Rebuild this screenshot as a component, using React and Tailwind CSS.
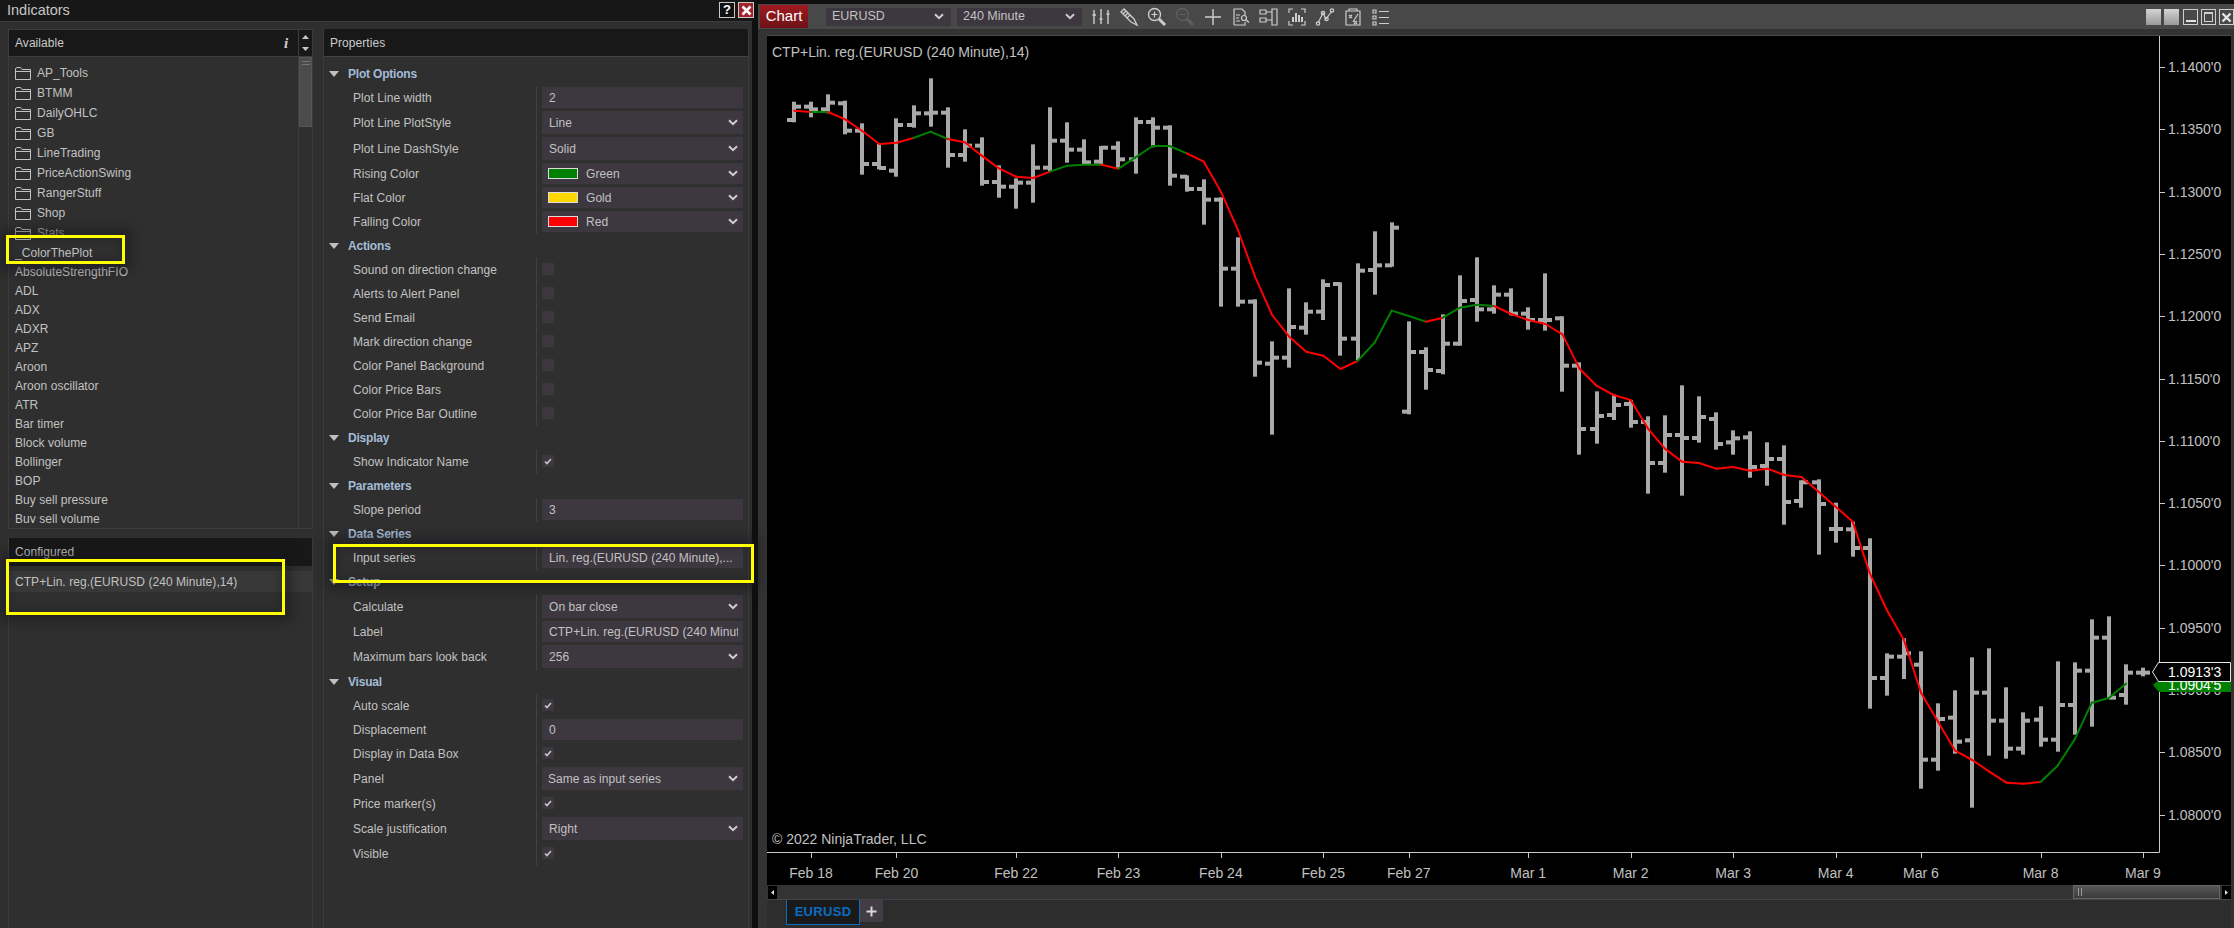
import React from "react";

const FONT = "font-['Liberation_Sans',Arial,sans-serif]";

const z9 = (y) => y / 3 + 60;
const z10 = (y) => y / 3 + 220;
const z11 = (y) => y / 3 + 500;

const bars9 = [
  [125,187,180,140],[125,172,140,148],[103,160,148,128],[122,223,130,212],[190,344,212,312],[252,328,312,324],
  [175,350,332,195],[136,203,195,160],[55,200,160,158],[142,323,158,285],[208,305,285,257],[232,377,257,366],
  [316,413,366,380],[355,446,380,368],[253,428,368,323],[142,335,323,242],[187,308,242,269],[238,312,269,307],
  [258,312,305,263],[244,325,263,298],[172,341,298,186],[172,262,186,203],[196,377,203,347],[346,395,350,387],
  [358,494,387,419],[412,740,419,626],[532,740,626,725],[718,950,725,908],[844,1124,911,893],[685,923,893,801],
  [727,824,803,755],[658,780,755,675],[667,887,672,836],[610,900,836,632],
];
const bars10 = [
  [34,224,150,136],[7,140,136,23],[304,583,575,396],[382,509,396,450],[283,463,453,371],[166,377,371,243],
  [112,305,240,268],[196,281,268,224],[205,286,224,281],[262,329,281,300],[160,332,300,300],[289,515,295,437],
  [427,704,437,627],[514,671,627,588],[523,600,585,555],[540,623,552,606],[589,821,606,729],[586,758,729,645],
  [496,827,645,654],[529,668,654,591],[577,689,597,672],[631,704,667,655],[634,773,652,741],[667,797,738,717],
  [676,914,717,846],[781,863,843,787],[778,1004,787,852],
];
const bars11 = [
  [8,128,87,87],[65,170,88,144],[115,626,144,534],[460,587,534,470],[415,537,470,460],[454,866,494,779],
  [610,812,779,657],[571,761,653,725],[472,923,721,578],[445,767,578,662],[562,776,662,746],[637,764,746,662],
  [619,740,659,719],[484,755,719,615],[487,704,615,512],[358,680,512,413],[349,596,413,593],[493,614,585,518],[503,529,518,518],
];
const bars = [
  ...bars9.map((b) => b.map(z9)),
  ...bars10.map((b) => b.map(z10)),
  ...bars11.map((b) => b.map(z11)),
];

const line = [
  ...[152,156,156,178,213,252,248,234,215,237,247,287,325,350,354,335,317,314,314,326,292,258,258,280,305,395,510,650,765,830,875,887,927,903].map(z9),
  ...[368,272,288,305,293,263,254,258,282,300,312,343,446,497,525,540,625,686,725,729,746,741,752,746,765,771,815,860,905].map(z10),
  ...[220,330,420,578,665,752,780,815,848,851,846,797,718,608,594,551].map(z11),
];
const greenSegs = new Set([1,7,8,15,16,17,19,20,21,22,33,34,35,36,38,39,40,73,74,75,76,77]);
const barX = (i) => 794 + i * 17.076;

const dates = [
  ["Feb 18",1],["Feb 20",6],["Feb 22",13],["Feb 23",19],["Feb 24",25],["Feb 25",31],["Feb 27",36],
  ["Mar 1",43],["Mar 2",49],["Mar 3",55],["Mar 4",61],["Mar 6",66],["Mar 8",73],["Mar 9",79],
];
const prices = ["1.1400'0","1.1350'0","1.1300'0","1.1250'0","1.1200'0","1.1150'0","1.1100'0","1.1050'0","1.1000'0","1.0950'0","1.0900'0","1.0850'0","1.0800'0"];
const priceY = (k) => 67 + k * 62.3;

function Chevron() {
  return (
    <svg width="10" height="7" viewBox="0 0 10 7" className="shrink-0">
      <path d="M1 1.2 L5 5.2 L9 1.2" fill="none" stroke="#cfcfcf" strokeWidth="2" />
    </svg>
  );
}

function Folder() {
  return (
    <svg width="16" height="13" viewBox="0 0 16 13" className="shrink-0">
      <path d="M.5 12.5 V1.5 L2 .5 H5.5 L7 2.5 H15.5 V12.5 Z M.5 4.5 H15.5" fill="none" stroke="#c4c4c4" strokeWidth="1" />
    </svg>
  );
}

function Yellow({ className }) {
  return (
    <div className={`absolute border-[3px] border-[#ffff00] shadow-[0_0_10px_6px_rgba(22,22,30,0.5),inset_0_0_6px_2px_rgba(22,22,30,0.3)] ${className}`} />
  );
}

const folders = ["AP_Tools","BTMM","DailyOHLC","GB","LineTrading","PriceActionSwing","RangerStuff","Shop","Stats"];
const indicators = ["_ColorThePlot","AbsoluteStrengthFIO","ADL","ADX","ADXR","APZ","Aroon","Aroon oscillator","ATR","Bar timer","Block volume","Bollinger","BOP","Buy sell pressure","Buy sell volume"];

const sections = [
  ["Plot Options", [
    ["Plot Line width","text","2"],["Plot Line PlotStyle","combo","Line"],["Plot Line DashStyle","combo","Solid"],
    ["Rising Color","color","Green","bg-[#008000]"],["Flat Color","color","Gold","bg-[#ffd700]"],["Falling Color","color","Red","bg-[#ff0000]"],
  ]],
  ["Actions", [
    ["Sound on direction change","check",false],["Alerts to Alert Panel","check",false],["Send Email","check",false],["Mark direction change","check",false],
    ["Color Panel Background","check",false],["Color Price Bars","check",false],["Color Price Bar Outline","check",false],
  ]],
  ["Display", [["Show Indicator Name","check",true]]],
  ["Parameters", [["Slope period","text","3"]]],
  ["Data Series", [["Input series","text","Lin. reg.(EURUSD (240 Minute),..."]]],
  ["Setup", [["Calculate","combo","On bar close"],["Label","text","CTP+Lin. reg.(EURUSD (240 Minute),14)"],["Maximum bars look back","combo","256"]]],
  ["Visual", [
    ["Auto scale","check",true],["Displacement","text","0"],["Display in Data Box","check",true],["Panel","panel","Same as input series"],
    ["Price marker(s)","check",true],["Scale justification","combo","Right"],["Visible","check",true],
  ]],
];

function Value({ row }) {
  const [, type, value, swatch] = row;
  if (type === "check") {
    return (
      <div className="mt-[5px] w-[12px] h-[12px] bg-[#3d3740] flex items-center justify-center">
        {value && (
          <svg width="8" height="7" viewBox="0 0 8 7">
            <path d="M1 3.5 L3 5.5 L7 1" fill="none" stroke="#c8c8c8" strokeWidth="1.6" />
          </svg>
        )}
      </div>
    );
  }
  if (type === "combo" || type === "panel") {
    return (
      <div className={`mt-[1px] h-[23px] w-[201px] bg-[#3d3740] flex items-center justify-between pr-[5px] ${type === "panel" ? "pl-[6px]" : "pl-[7px]"}`}>
        <span>{value}</span>
        <Chevron />
      </div>
    );
  }
  if (type === "color") {
    return (
      <div className="mt-[1px] h-[21px] w-[201px] bg-[#3d3740] flex items-center justify-between pl-[6px] pr-[5px]">
        <div className="flex items-center gap-[8px]">
          <span className={`w-[30px] h-[11px] border border-[#dcdcdc] ${swatch}`} />
          <span>{value}</span>
        </div>
        <Chevron />
      </div>
    );
  }
  return (
    <div className="mt-[1px] h-[21px] w-[201px] bg-[#3d3740] flex items-center pl-[7px] pr-[5px]">
      <span className="whitespace-nowrap overflow-hidden">{value}</span>
    </div>
  );
}

function Properties() {
  return (
    <div className="w-[426px] border-x border-[#3c3c3c] flex flex-col text-[12px] text-[#c2c2c2] tracking-[0.05px]">
      <div className="h-[28px] bg-[#181818] border-b border-[#444] flex items-center pl-[6px] text-[#cbcbcb]">Properties</div>
      <div className="pt-[5px]">
        {sections.map(([name, rows]) => (
          <div key={name}>
            <div className="h-[24px] flex items-center">
              <svg width="10" height="6" viewBox="0 0 10 6" className="ml-[5px]">
                <path d="M0 0 H10 L5 6 Z" fill="#c0c0c0" />
              </svg>
              <span className="ml-[9px] font-bold text-[#a4bcd6] tracking-[-0.2px]">{name}</span>
            </div>
            {rows.map((row) => {
              const tall = row[1] === "combo" || row[1] === "panel";
              return (
                <div key={row[0]} className={`flex ${tall ? "h-[26px]" : "h-[24px]"}`}>
                  <div className="w-[212px] pl-[29px] flex items-center whitespace-nowrap">{row[0]}</div>
                  <div className="border-l border-[#414141] pl-[5px]">
                    <Value row={row} />
                  </div>
                </div>
              );
            })}
          </div>
        ))}
      </div>
    </div>
  );
}

function LeftColumn() {
  return (
    <div className="w-[305px] flex flex-col text-[12px] text-[#c2c2c2] tracking-[0.05px]">
      <div className="h-[28px] bg-[#181818] border border-[#3c3c3c] flex items-stretch">
        <div className="flex-1 flex items-center pl-[6px] text-[#cbcbcb]">Available</div>
        <div className="w-[14px] flex items-center justify-center font-['Liberation_Serif',serif] italic font-bold text-[15px] text-[#cfcfcf]">i</div>
        <div className="w-[14px] ml-[5px] border-l border-[#3c3c3c] flex flex-col items-center justify-center gap-[8px]">
          <svg width="7" height="4" viewBox="0 0 7 4"><path d="M0 4 H7 L3.5 0 Z" fill="#c8c8c8" /></svg>
          <svg width="7" height="4" viewBox="0 0 7 4"><path d="M0 0 H7 L3.5 4 Z" fill="#c8c8c8" /></svg>
        </div>
      </div>
      <div className="h-[472px] border-x border-b border-[#3c3c3c] flex overflow-hidden">
        <div className="flex-1 h-[466px] overflow-hidden pt-[6px] pl-[6px]">
          {folders.map((f) => (
            <div key={f} className="h-[20px] flex items-center gap-[6px]">
              <Folder />
              <span className={f === "Stats" ? "text-[#aaaaaa]" : ""}>{f}</span>
            </div>
          ))}
          {indicators.map((n) => (
            <div key={n} className="h-[19px] flex items-center whitespace-nowrap">{n}</div>
          ))}
        </div>
        <div className="w-[14px] border-l border-[#3c3c3c]">
          <div className="h-[70px] bg-[#4b4b4b] border border-[#555] flex flex-col items-center pt-[3px] gap-[2px]">
            <span className="w-[8px] h-px bg-[#777]" />
            <span className="w-[8px] h-px bg-[#777]" />
          </div>
        </div>
      </div>
      <div className="mt-[9px] flex-1 border-x border-[#3c3c3c] flex flex-col">
        <div className="h-[28px] bg-[#181818] flex items-center pl-[6px] text-[#cbcbcb]">Configured</div>
        <div className="mt-[5px] h-[21px] bg-[#383838] flex items-center pl-[6px] whitespace-nowrap">CTP+Lin. reg.(EURUSD (240 Minute),14)</div>
      </div>
    </div>
  );
}

function ToolIcon({ children, dim }) {
  return (
    <svg width="20" height="20" viewBox="0 0 20 20" fill="none" stroke={dim ? "#5e5e5e" : "#cdcdcd"} strokeWidth="1.2" className="shrink-0">
      {children}
    </svg>
  );
}

function Toolbar() {
  const icons = [
    <ToolIcon key="a"><path d="M3 3 V17 M10 2 V17 M17 3 V17 M1.5 8 H5 M8.5 12 H11.5 M15.5 7 H18.5" strokeWidth="1.4" /></ToolIcon>,
    <ToolIcon key="b"><path d="M2 5 L5 2 L15 12 L18 18 L12 15 Z M4 7 L7 4 M6 9 L9 6 M8 11 L11 8" strokeWidth="1.3" /></ToolIcon>,
    <ToolIcon key="c"><circle cx="7.5" cy="7.5" r="6" strokeWidth="1.4" /><path d="M4.5 7.5 H10.5 M7.5 4.5 V10.5" /><path d="M12 12 L18 18" strokeWidth="3" /></ToolIcon>,
    <ToolIcon key="d" dim><circle cx="7.5" cy="7.5" r="6" strokeWidth="1.4" /><path d="M4.5 7.5 H10.5" /><path d="M12 12 L18 18" strokeWidth="3" /></ToolIcon>,
    <ToolIcon key="e"><path d="M10 2 V18 M2 10 H18" strokeWidth="1.4" /></ToolIcon>,
    <ToolIcon key="f"><path d="M3 18 V2 H11 L14 5 V8 M3 18 H14 V15 M5 8 H9 M5 11 H8 M5 14 H9" /><circle cx="13" cy="11" r="2.5" /><path d="M15 13 L18 15.5" strokeWidth="1.6" /></ToolIcon>,
    <ToolIcon key="g"><path d="M1 3 H7 V7 H1 Z M1 11 H7 V15 H1 Z M7 5 H13 M7 13 H13 M13 2 H18 V18 H13 Z" /></ToolIcon>,
    <ToolIcon key="h"><path d="M2 6 V2 H6 M14 2 H18 V6 M2 14 V18 H6 M14 18 H18 V14" /><path d="M6 15 V10 M9 15 V6 M12 15 V8 M15 15 V10" strokeWidth="2" /></ToolIcon>,
    <ToolIcon key="i"><path d="M3 16 L8 6 L11 12 L17 4" /><circle cx="3" cy="16.5" r="1.7" /><circle cx="8" cy="6" r="1.7" /><circle cx="11.5" cy="12" r="1.7" /><circle cx="17" cy="3.5" r="1.7" /></ToolIcon>,
    <ToolIcon key="j"><path d="M3 4 H17 V18 H3 Z M6 4 V2 H14 V4 M6 8 L9 11 M9 8 L6 11 M10 15 L15 7 M11 14 L14 17 M14 14 L11 17" /></ToolIcon>,
    <ToolIcon key="k"><path d="M2 3 H5 V6 H2 Z M2 9 H5 V12 H2 Z M2 15 H5 V18 H2 Z M8 4.5 H18 M8 10.5 H18 M8 16.5 H18" /></ToolIcon>,
  ];
  return (
    <div className="h-[25px] bg-[#484848] flex items-center">
      <div className="ml-[2px] w-[48px] h-[23px] bg-gradient-to-b from-[#a01a20] to-[#6e1216] flex items-center justify-center text-[15px] text-white">Chart</div>
      <div className="ml-[18px] w-[125px] h-[18px] bg-[#3d3740] flex items-center justify-between pl-[6px] pr-[7px] text-[12.5px] text-[#c2c2c2]">
        <span>EURUSD</span><Chevron />
      </div>
      <div className="ml-[6px] w-[125px] h-[18px] bg-[#3d3740] flex items-center justify-between pl-[6px] pr-[7px] text-[12.5px] text-[#c2c2c2]">
        <span>240 Minute</span><Chevron />
      </div>
      <div className="ml-[9px] flex items-center gap-[8px]">{icons}</div>
      <div className="ml-auto flex items-center gap-[3px] mt-[1px]">
        <div className="w-[15px] h-[16px] bg-gradient-to-b from-[#d4d4d4] to-[#9a9a9a]" />
        <div className="w-[15px] h-[16px] bg-gradient-to-b from-[#d4d4d4] to-[#9a9a9a] mr-[1px]" />
        <div className="w-[15px] h-[16px] border border-[#cfcfcf] flex items-end justify-center pb-[2px]"><span className="w-[10px] h-[2px] bg-[#e0e0e0]" /></div>
        <div className="w-[15px] h-[16px] border border-[#cfcfcf] flex p-[2px]"><span className="flex-1 border border-[#cfcfcf] border-t-2" /></div>
        <div className="w-[15px] h-[16px] border border-[#cfcfcf] flex items-center justify-center">
          <svg width="11" height="11" viewBox="0 0 11 11"><path d="M1.5 1.5 L9.5 9.5 M9.5 1.5 L1.5 9.5" stroke="#e6e6e6" strokeWidth="2.4" /></svg>
        </div>
      </div>
    </div>
  );
}

function ChartCanvas() {
  return (
    <div className="relative h-[849px] bg-black overflow-hidden text-[14px] text-[#c0c0c0]">
      <svg width="1464" height="849" viewBox="767 36 1464 849" className="absolute inset-0">
        <path d="M2159.5 36 V852.5 H767" fill="none" stroke="#c9c9c9" />
        {prices.map((p, k) => (
          <path key={p} d={`M2159 ${Math.round(priceY(k)) + 0.5} H2165`} stroke="#c9c9c9" />
        ))}
        {dates.map(([d, i]) => (
          <path key={d} d={`M${Math.round(barX(i)) + 0.5} 852 V858`} stroke="#c9c9c9" />
        ))}
        {bars.map(([h, l, o, c], i) => {
          const x = Math.round(barX(i));
          return (
            <g key={i} fill="#a9a9a9">
              <rect x={x - 2} y={h} width="4" height={l - h} />
              <rect x={x - 7} y={o - 2} width="7" height="4" />
              <rect x={x} y={c - 2} width="7" height="4" />
            </g>
          );
        })}
        {line.slice(0, -1).map((y, i) => (
          <line key={i} x1={barX(i)} y1={y} x2={barX(i + 1)} y2={line[i + 1]} stroke={greenSegs.has(i) ? "#008000" : "#ff0000"} strokeWidth="2" strokeLinecap="round" />
        ))}
      </svg>
      <span className="absolute left-[5px] top-[6px] whitespace-nowrap">CTP+Lin. reg.(EURUSD (240 Minute),14)</span>
      <span className="absolute left-[5px] top-[793px] whitespace-nowrap">© 2022 NinjaTrader, LLC</span>
      {prices.map((p, k) => (
        <span key={p} className="absolute left-[1401px] leading-[16px]" style={{ top: priceY(k) - 36 - 8 }}>{p}</span>
      ))}
      {dates.map(([d, i]) => (
        <span key={d} className="absolute -translate-x-1/2 leading-[16px] whitespace-nowrap top-[829px]" style={{ left: barX(i) - 767 }}>{d}</span>
      ))}
      <div className="absolute left-[1386px] top-[644px] w-[78px] h-[12px]">
        <svg width="78" height="12" viewBox="0 0 78 12" className="absolute inset-0"><path d="M0 5 L6 0 H78 V12 H6 Z" fill="#008000" /></svg>
        <span className="absolute left-[15px] top-[-3px] leading-[16px] text-white">1.0904'5</span>
      </div>
      <div className="absolute left-[1385px] top-[626px] w-[79px] h-[20px]">
        <svg width="79" height="20" viewBox="0 0 79 20" className="absolute inset-0"><path d="M.5 10 L6.5 .5 H78.5 V19.5 H6.5 Z" fill="#000" stroke="#e8e8e8" /></svg>
        <span className="absolute left-[16px] top-[2px] leading-[16px] text-white">1.0913'3</span>
      </div>
    </div>
  );
}

export default function App() {
  return (
    <div className={`relative w-[2234px] h-[928px] overflow-hidden flex bg-[#0f0f0f] ${FONT}`}>
      <div className="w-[752px] h-full flex flex-col bg-[#2f2f2f]">
        <div className="h-[22px] bg-[#171717] border-b border-[#3b3b3b] flex items-center pl-[7px] text-[14.5px] text-[#c6c6c6] relative">
          Indicators
          <div className="absolute right-[17px] top-[2px] w-[16px] h-[16px] bg-[#111] border border-[#c8c8c8] flex items-center justify-center text-[13px] font-bold text-white">?</div>
          <div className="absolute right-[-2px] top-[2px] w-[16px] h-[16px] bg-[#a32129] border border-[#c8c8c8] flex items-center justify-center">
            <svg width="11" height="11" viewBox="0 0 11 11"><path d="M1.5 1.5 L9.5 9.5 M9.5 1.5 L1.5 9.5" stroke="#fff" strokeWidth="2.6" /></svg>
          </div>
        </div>
        <div className="flex-1 flex pt-[7px] pl-[8px] gap-[10px] min-h-0">
          <LeftColumn />
          <Properties />
        </div>
      </div>
      <div className="ml-[6px] flex-1 min-w-0 flex flex-col">
        <div className="h-[4px] bg-[#0f0f0f]" />
        <Toolbar />
        <div className="flex-1 bg-[#333] flex flex-col pl-[9px] pr-[3px]">
          <div className="h-[7px] border-b border-[#4a4a4a]" />
          <ChartCanvas />
          <div className="h-[15px] bg-[#333] border-b border-[#44444c] flex items-center justify-between pr-0">
            <div className="w-[9px] h-[13px] bg-black flex items-center justify-center ml-[1px]">
              <svg width="3" height="5" viewBox="0 0 3 5"><path d="M3 0 V5 L0 2.5 Z" fill="#ddd" /></svg>
            </div>
            <div className="ml-auto flex items-center h-full">
              <div className="w-[147px] h-[14px] border border-[#666] bg-gradient-to-b from-[#585858] to-[#3a3a3a] flex items-center pl-[4px] gap-[2px]">
                <span className="w-px h-[8px] bg-[#999]" />
                <span className="w-px h-[8px] bg-[#999]" />
              </div>
              <div className="ml-[2px] w-[9px] h-[13px] bg-black flex items-center justify-center">
                <svg width="3" height="5" viewBox="0 0 3 5"><path d="M0 0 V5 L3 2.5 Z" fill="#ddd" /></svg>
              </div>
            </div>
          </div>
          <div className="h-[28px] bg-[#2d2d2d] flex items-start pl-[19px]">
            <div className="w-[74px] h-[25px] bg-[#1a1a1a] border-x border-b border-[#0a6dc2] flex items-center justify-center text-[13px] font-semibold tracking-[0.3px] text-[#0a6dc2]">EURUSD</div>
            <div className="w-[23px] h-[22px] bg-[#423c44] flex items-center justify-center">
              <svg width="11" height="11" viewBox="0 0 11 11"><path d="M5.5 .5 V10.5 M.5 5.5 H10.5" stroke="#d8d8d8" strokeWidth="2" /></svg>
            </div>
          </div>
        </div>
      </div>
      <Yellow className="left-[6px] top-[235px] w-[119px] h-[29px]" />
      <Yellow className="left-[6px] top-[559px] w-[279px] h-[56px]" />
      <Yellow className="left-[333px] top-[544px] w-[421px] h-[39px]" />
    </div>
  );
}
